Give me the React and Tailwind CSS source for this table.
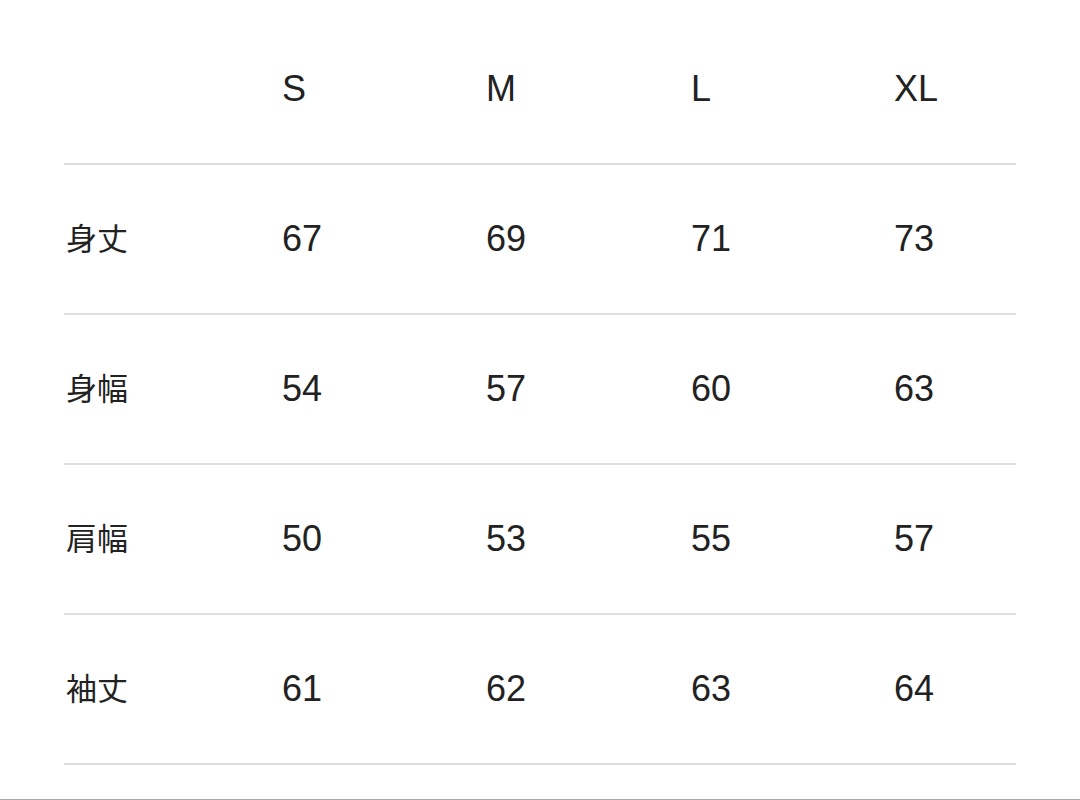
const sizes = ['S', 'M', 'L', 'XL'];

const rows = [
  ['身丈', ['67', '69', '71', '73']],
  ['身幅', ['54', '57', '60', '63']],
  ['肩幅', ['50', '53', '55', '57']],
  ['袖丈', ['61', '62', '63', '64']],
];

const grid = 'grid grid-cols-[218px_204px_205px_203px_1fr] items-center h-[150px] border-b-2 border-[#dedede]';
const latin = "font-['Liberation_Sans','Noto_Sans_CJK_JP',sans-serif] text-[36px] leading-none text-[#222]";
const cjk = "font-['Noto_Sans_CJK_JP',sans-serif] text-[31px] leading-none text-[#222]";

export default function App() {
  return (
    <div className="w-[1080px] h-[800px] bg-white overflow-hidden flex flex-col border-b border-[#a8a8a8]">
      <div className="mx-[64px] mt-[15px]">
        <div className={grid}>
          <div />
          {sizes.map((s) => (
            <div key={s} className={latin}>{s}</div>
          ))}
        </div>
        {rows.map(([label, vals]) => (
          <div key={label} className={grid}>
            <div className={cjk + ' pl-[2px] pb-[5px]'}>{label}</div>
            {vals.map((v, i) => (
              <div key={i} className={latin}>{v}</div>
            ))}
          </div>
        ))}
      </div>
    </div>
  );
}
